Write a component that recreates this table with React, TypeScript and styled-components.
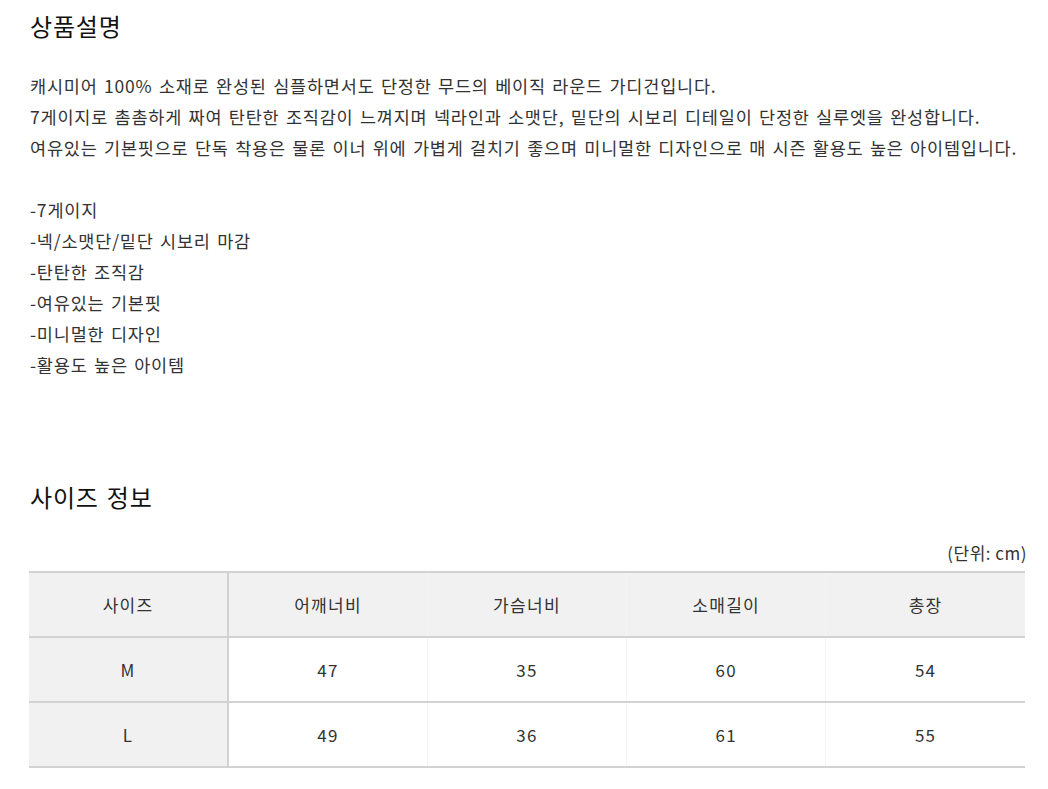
import React from "react";
import styled, { createGlobalStyle } from "styled-components";

const Global = createGlobalStyle`
  html, body { margin: 0; padding: 0; background: #fff; }
  body { font-family: "Noto Sans CJK KR", "Noto Sans", sans-serif; color: #333; letter-spacing: 1px; }
`;

const Page = styled.div`
  width: 996px;
  padding: 9px 0 0 29px;
`;

const Heading = styled.h2<{ $top?: number }>`
  margin: ${(p) => p.$top ?? 0}px 0 0 1px;
  font-size: 24px;
  line-height: 34px;
  font-weight: 400;
  color: #111;
  letter-spacing: 0.8px;
  word-spacing: 2px;
`;

const Description = styled.div`
  margin: 27px 0 0 1px;
  font-size: 17.5px;
  line-height: 31px;
  color: #333;
  letter-spacing: 0.8px;
  word-spacing: 1.7px;
`;

const Line = styled.div`
  min-height: 31px;
  white-space: nowrap;
`;

const Unit = styled.div`
  margin-top: 27px;
  text-align: right;
  font-size: 17px;
  line-height: 24px;
  color: #333;
  letter-spacing: 0.5px;
  margin-right: -2px;
`;

const Table = styled.table`
  margin-top: 6px;
  width: 996px;
  border-collapse: collapse;
  table-layout: fixed;
  border-top: 2px solid #d2d2d2;
`;

const Row = styled.tr<{ $head?: boolean }>`
  background: ${(p) => (p.$head ? "#f1f1f1" : "#fff")};
  border-bottom: 2px solid #d2d2d2;
`;

const Cell = styled.td<{ $first?: boolean }>`
  height: 63px;
  padding: 0;
  text-align: center;
  vertical-align: middle;
  font-size: 17px;
  color: #333;
  letter-spacing: 1.3px;
  background: ${(p) => (p.$first ? "#f1f1f1" : "transparent")};
  border-right: ${(p) => (p.$first ? "2px solid #d2d2d2" : "1px solid #f4f4f4")};
  &:last-child { border-right: none; }
`;

const desc = [
  "캐시미어 100% 소재로 완성된 심플하면서도 단정한 무드의 베이직 라운드 가디건입니다.",
  "7게이지로 촘촘하게 짜여 탄탄한 조직감이 느껴지며 넥라인과 소맷단, 밑단의 시보리 디테일이 단정한 실루엣을 완성합니다.",
  "여유있는 기본핏으로 단독 착용은 물론 이너 위에 가볍게 걸치기 좋으며 미니멀한 디자인으로 매 시즌 활용도 높은 아이템입니다.",
  "",
  "-7게이지",
  "-넥/소맷단/밑단 시보리 마감",
  "-탄탄한 조직감",
  "-여유있는 기본핏",
  "-미니멀한 디자인",
  "-활용도 높은 아이템",
];

const header = ["사이즈", "어깨너비", "가슴너비", "소매길이", "총장"];
const rows = [
  ["M", "47", "35", "60", "54"],
  ["L", "49", "36", "61", "55"],
];

export default function App() {
  return (
    <>
      <Global />
      <Page>
        <Heading>상품설명</Heading>
        <Description>
          {desc.map((l, i) => (
            <Line key={i}>{l}</Line>
          ))}
        </Description>
        <Heading $top={100}>사이즈 정보</Heading>
        <Unit>(단위: cm)</Unit>
        <Table>
          <tbody>
            <Row $head>
              {header.map((h, i) => (
                <Cell key={h} $first={i === 0}>
                  {h}
                </Cell>
              ))}
            </Row>
            {rows.map((r) => (
              <Row key={r[0]}>
                {r.map((c, i) => (
                  <Cell key={i} $first={i === 0}>
                    {c}
                  </Cell>
                ))}
              </Row>
            ))}
          </tbody>
        </Table>
      </Page>
    </>
  );
}
